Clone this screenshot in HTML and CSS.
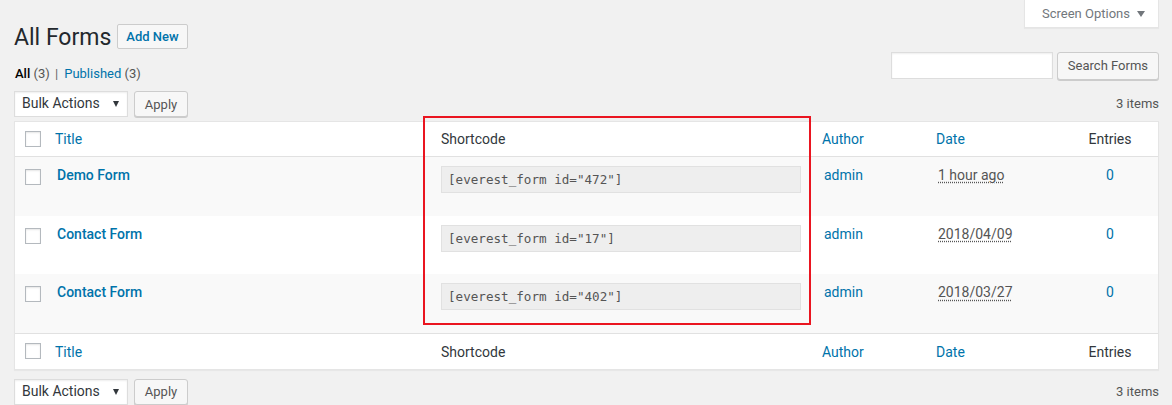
FILE: index.html
```html
<!DOCTYPE html>
<html lang="en">

<head>
    <meta charset="UTF-8">
    <meta name="viewport" content="width=device-width, initial-scale=1.0">
    <title>All Forms</title>
    <link rel="stylesheet" href="styles.css">
</head>

<body>

    <div class="screen-meta-links">
        <button class="screen-options-tab">Screen Options <span class="tab-arrow"></span></button>
    </div>

    <div class="wrap">
        <div class="heading">
            <h1>All Forms</h1>
            <a class="add-new" href="#">Add New</a>
        </div>

        <div class="filter-row">
            <ul class="subsubsub">
                <li><a class="current" href="#">All <span class="count">(3)</span></a> <span class="sep">|</span></li>
                <li><a href="#">Published <span class="count">(3)</span></a></li>
            </ul>
            <div class="search-box">
                <input type="search" class="search-input">
                <button class="button">Search Forms</button>
            </div>
        </div>

        <div class="tablenav">
            <div class="bulk">
                <div class="select-box">Bulk Actions <span class="select-arrow"></span></div>
                <button class="button">Apply</button>
            </div>
            <span class="num-items">3 items</span>
        </div>

        <div class="table-holder">
            <table class="list-table">
                <colgroup>
                    <col style="width: 32px">
                    <col style="width: 384px">
                    <col style="width: 383px">
                    <col style="width: 114px">
                    <col style="width: 134px">
                    <col style="width: 96px">
                </colgroup>
                <thead>
                    <tr>
                        <th class="check-col"><span class="checkbox"></span></th>
                        <th class="sortable"><a href="#">Title</a></th>
                        <th>Shortcode</th>
                        <th class="sortable"><a href="#">Author</a></th>
                        <th class="sortable"><a href="#">Date</a></th>
                        <th class="entries">Entries</th>
                    </tr>
                </thead>
                <tbody>
                    <tr class="alt">
                        <td class="check-col"><span class="checkbox"></span></td>
                        <td><a class="row-title" href="#">Demo Form</a></td>
                        <td><input class="shortcode" type="text" readonly value='[everest_form id="472"]'></td>
                        <td><a href="#">admin</a></td>
                        <td><abbr title="2018/04/10">1 hour ago</abbr></td>
                        <td class="entries"><a href="#">0</a></td>
                    </tr>
                    <tr>
                        <td class="check-col"><span class="checkbox"></span></td>
                        <td><a class="row-title" href="#">Contact Form</a></td>
                        <td><input class="shortcode" type="text" readonly value='[everest_form id="17"]'></td>
                        <td><a href="#">admin</a></td>
                        <td><abbr title="2018/04/09">2018/04/09</abbr></td>
                        <td class="entries"><a href="#">0</a></td>
                    </tr>
                    <tr class="alt">
                        <td class="check-col"><span class="checkbox"></span></td>
                        <td><a class="row-title" href="#">Contact Form</a></td>
                        <td><input class="shortcode" type="text" readonly value='[everest_form id="402"]'></td>
                        <td><a href="#">admin</a></td>
                        <td><abbr title="2018/03/27">2018/03/27</abbr></td>
                        <td class="entries"><a href="#">0</a></td>
                    </tr>
                </tbody>
                <tfoot>
                    <tr>
                        <th class="check-col"><span class="checkbox"></span></th>
                        <th class="sortable"><a href="#">Title</a></th>
                        <th>Shortcode</th>
                        <th class="sortable"><a href="#">Author</a></th>
                        <th class="sortable"><a href="#">Date</a></th>
                        <th class="entries">Entries</th>
                    </tr>
                </tfoot>
            </table>

            <!-- highlight drawn over the shortcode column -->
            <div class="highlight"></div>
        </div>

        <div class="tablenav bottom">
            <div class="bulk">
                <div class="select-box">Bulk Actions <span class="select-arrow"></span></div>
                <button class="button">Apply</button>
            </div>
            <span class="num-items">3 items</span>
        </div>
    </div>

</body>

</html>
```

FILE: styles.css
```css
body {
    font-family: Roboto, "Liberation Sans", sans-serif;
    font-size: 13px;
    line-height: 1.4;
    background-color: #f1f1f1;
    color: #444;
    margin: 0;
}

a {
    color: #0073aa;
    text-decoration: none;
}

.screen-meta-links {
    float: right;
    margin-right: 13px;
}

.screen-options-tab {
    display: flex;
    align-items: center;
    gap: 6px;
    width: 135px;
    height: 28px;
    padding: 0 0 0 17px;
    background-color: #fff;
    border: 1px solid #e5e5e5;
    border-top: none;
    box-shadow: 0 1px 1px rgba(0, 0, 0, 0.04);
    font-family: inherit;
    font-size: 13px;
    color: #72777c;
    box-sizing: border-box;
}

.tab-arrow {
    width: 0;
    height: 0;
    border-left: 4px solid transparent;
    border-right: 4px solid transparent;
    border-top: 6px solid #72777c;
    margin-left: 1px;
}

.wrap {
    padding: 0 13px 0 14px;
}

.heading {
    display: flex;
    align-items: center;
    gap: 6px;
    padding-top: 21px;
}

.heading h1 {
    margin: 0;
    padding-top: 2px;
    font-size: 23px;
    font-weight: 400;
    line-height: 29px;
    color: #23282d;
}

.add-new {
    display: inline-block;
    height: 25px;
    line-height: 23px;
    padding: 0 8px;
    border: 1px solid #ccc;
    border-radius: 2px;
    background-color: #f7f7f7;
    font-size: 13px;
    font-weight: 500;
    box-sizing: border-box;
}

.filter-row {
    display: flex;
    justify-content: space-between;
    align-items: flex-end;
    margin-top: 0;
}

.subsubsub {
    list-style: none;
    display: flex;
    gap: 4px;
    margin: 0 0 -3px 1px;
    padding: 0;
    font-size: 13px;
    color: #666;
}

.subsubsub .current {
    color: #000;
    font-weight: 500;
}

.count {
    color: #555;
    font-weight: 400;
}

.sep {
    color: #666;
    margin: 0 2px;
}

.search-box {
    display: flex;
    gap: 4px;
    align-items: flex-start;
}

.search-input {
    width: 162px;
    height: 27px;
    margin: 0;
    border: 1px solid #ddd;
    box-shadow: inset 0 1px 2px rgba(0, 0, 0, 0.07);
    background-color: #fff;
    box-sizing: border-box;
}

.button {
    height: 28px;
    padding: 0 10px 1px;
    border: 1px solid #ccc;
    border-radius: 3px;
    background-color: #f7f7f7;
    box-shadow: 0 1px 0 #ccc;
    font-family: inherit;
    font-size: 13px;
    color: #555;
    box-sizing: border-box;
}

.tablenav {
    display: flex;
    justify-content: space-between;
    align-items: center;
    height: 26px;
    margin: 11px 0 4px;
}

.tablenav.bottom {
    margin: 9px 0 0;
}

.bulk {
    display: flex;
    gap: 6px;
}

.select-box {
    display: flex;
    align-items: center;
    justify-content: space-between;
    width: 114px;
    height: 26px;
    padding: 0 8px 0 7px;
    border: 1px solid #ddd;
    background-color: #fff;
    box-shadow: inset 0 1px 2px rgba(0, 0, 0, 0.07);
    font-size: 14px;
    color: #32373c;
    box-sizing: border-box;
}

.select-arrow {
    width: 0;
    height: 0;
    border-left: 3px solid transparent;
    border-right: 3px solid transparent;
    border-top: 6px solid #32373c;
}

.bulk .button {
    height: 26px;
    width: 54px;
    padding: 0;
}

.num-items {
    font-size: 13px;
    color: #555;
    margin-top: 1px;
}

.table-holder {
    position: relative;
}

.list-table {
    width: 100%;
    table-layout: fixed;
    border-collapse: separate;
    border-spacing: 0;
    background-color: #fff;
    border: 1px solid #e5e5e5;
    box-shadow: 0 1px 1px rgba(0, 0, 0, 0.04);
    font-size: 14px;
}

.list-table th {
    text-align: left;
    font-weight: 400;
    color: #32373c;
    padding: 7px 10px;
    line-height: 20px;
}

.list-table thead th {
    border-bottom: 1px solid #e1e1e1;
}

.list-table tfoot th {
    border-top: 1px solid #e1e1e1;
    padding: 8px 10px 7px;
}

.list-table th.sortable {
    padding-left: 8px;
}

.list-table td {
    padding: 8px 10px;
    vertical-align: top;
    line-height: 20px;
    color: #555;
}

.list-table tbody tr {
    height: 58.67px;
}

.list-table tr.alt {
    background-color: #f9f9f9;
}

.list-table .check-col {
    padding: 9px 0 0 10px;
    vertical-align: top;
}

.list-table td.check-col {
    padding-top: 12px;
}

.checkbox {
    display: block;
    width: 16px;
    height: 16px;
    border: 1px solid #b4b9be;
    background-color: #fff;
    box-shadow: inset 0 1px 2px rgba(0, 0, 0, 0.1);
    box-sizing: border-box;
}

.row-title {
    font-weight: 500;
}

.shortcode {
    display: block;
    width: 360px;
    height: 27px;
    margin: 1px 0 0;
    padding: 0 6px;
    border: 1px solid #e1e1e1;
    background-color: #eee;
    font-family: "DejaVu Sans Mono", monospace;
    font-size: 12.6px;
    color: #555;
    box-sizing: border-box;
}

abbr {
    text-decoration: underline dotted;
    text-underline-offset: 2px;
    color: #555;
}

.list-table .entries {
    text-align: center;
}

.highlight {
    position: absolute;
    left: 409px;
    top: -5px;
    width: 388px;
    height: 209px;
    border: 2px solid #ea1520;
    box-sizing: border-box;
    pointer-events: none;
}
```
